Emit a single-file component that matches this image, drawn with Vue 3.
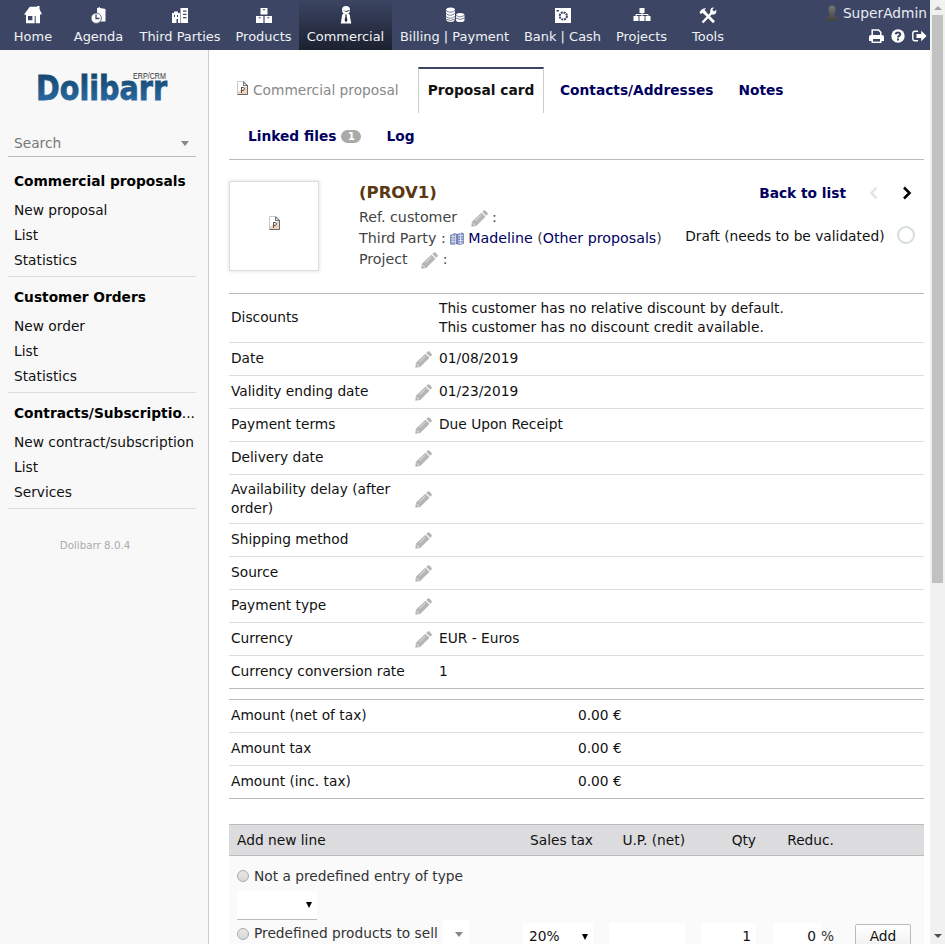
<script setup>
const nav = [
  { id: 'home', label: 'Home', w: 64 },
  { id: 'agenda', label: 'Agenda', w: 67 },
  { id: 'third', label: 'Third Parties', w: 96 },
  { id: 'products', label: 'Products', w: 71 },
  { id: 'commercial', label: 'Commercial', w: 93, active: true },
  { id: 'billing', label: 'Billing | Payment', w: 125 },
  { id: 'bank', label: 'Bank | Cash', w: 91 },
  { id: 'projects', label: 'Projects', w: 67 },
  { id: 'tools', label: 'Tools', w: 66 },
]
const menus = [
  { title: 'Commercial proposals', items: ['New proposal', 'List', 'Statistics'] },
  { title: 'Customer Orders', items: ['New order', 'List', 'Statistics'] },
  { title: 'Contracts/Subscriptio', more: true, items: ['New contract/subscription', 'List', 'Services'] },
]
const fields = [
  { label: 'Discounts', value: 'This customer has no relative discount by default.\nThis customer has no discount credit available.', tall: true },
  { label: 'Date', value: '01/08/2019', edit: true },
  { label: 'Validity ending date', value: '01/23/2019', edit: true },
  { label: 'Payment terms', value: 'Due Upon Receipt', edit: true },
  { label: 'Delivery date', value: '', edit: true },
  { label: 'Availability delay (after order)', value: '', edit: true, tall: true },
  { label: 'Shipping method', value: '', edit: true },
  { label: 'Source', value: '', edit: true },
  { label: 'Payment type', value: '', edit: true },
  { label: 'Currency', value: 'EUR - Euros', edit: true },
  { label: 'Currency conversion rate', value: '1' },
]
const amounts = ['Amount (net of tax)', 'Amount tax', 'Amount (inc. tax)']
</script>

<template>
  <div class="page">
    <svg class="defs" width="0" height="0">
      <symbol id="pencil" viewBox="0 0 17 17">
        <path fill="#b5b5b5" d="M.3 16.7.9 11.7 10.4 2.7l4.1 4L5.2 15.9zM11.3 1.900 12.7.6q.9-.7 1.7 0l2.100 2.100q.7.9 0 1.700l-1.300 1.400z" />
        <path stroke="#fff" stroke-width=".7" fill="none" d="M4.600 10.700 10.400 5M1.700 13.200l2.300 2.200" />
      </symbol>
      <symbol id="doc" viewBox="0 0 11 14">
        <path fill="#fff" stroke="#c8c8c8" d="M.5.5h6l3.500 3.500v9.500H.5z" />
        <path fill="#f0d2ba" d="M1 11l8.500-6v8H1z" />
        <path fill="#777" d="M6 .5h1l3.500 3.500v1H6z" />
        <path fill="#fff" d="M7 2l2 2H7z" />
        <path stroke="#666" fill="none" d="M10.500 4v9.500H.5" />
        <path stroke="#555" fill="none" d="M4.500 12V6M5 6.500h1.500q1 0 1 1.200T6.300 9.500H5" />
      </symbol>
      <symbol id="home" viewBox="0 0 18 18">
        <path fill="#fff" fill-rule="evenodd" d="M0 8.500 5.800.8h8.400L18 8.300l-2 .3v8.600H2V8.700zM4 10v4.200h4.400V10zm6.700 0v7.200h1V10z" />
        <path fill="#fff" d="M13 0h2.500v4H13z" />
      </symbol>
      <symbol id="agenda" viewBox="0 0 18 18">
        <path fill="#fff" d="M7 2.300 10 1v1l5.500 1v12.600H7z" />
        <circle cx="6.200" cy="12.200" r="5.200" fill="#fff" stroke="#3c4664" stroke-width=".8" />
        <path stroke="#3c4664" stroke-width="1.300" fill="none" d="M6 8.500v4h3.500" />
      </symbol>
      <symbol id="third" viewBox="0 0 18 18">
        <path fill="#fff" fill-rule="evenodd" d="M1 7h2V5.500h4V7h2v10H7v-4H5.500v4H1zM3 9v2h1V9zm3 0v2h1V9zM9.500 2H17v15H9.500zM12 4.500v1.200h3.500V4.500zm0 3.300V9h3.500V7.800zm0 3.300v1.200h3.500v-1.200z" />
      </symbol>
      <symbol id="products" viewBox="0 0 18 18">
        <path fill="#fff" d="M5.500 2h7v6.500h-7zM1 10h7.400v7H1zm8.600 0H17v7H9.600z" />
        <path fill="#3c4664" d="M8 3.200h2v1H8zM3.700 11.200h2v1h-2zm8.600 0h2v1h-2z" />
      </symbol>
      <symbol id="commercial" viewBox="0 0 18 18">
        <circle cx="9" cy="4" r="4" fill="#fff" />
        <path fill="#fff" d="M6.200 7.500h5.600q1.400 1 1.500 5l1 5H3.800l.8-5q.2-4 1.600-5z" />
        <path fill="#222a3d" d="M8.200 8.500h1.600l-.3 1.600.9 4.200L9 16.500l-1.400-2.200.9-4.200zM5.500 4.300l3.700.8 3.400-1.200v.8L9.500 6z" />
      </symbol>
      <symbol id="billing" viewBox="0 0 20 18">
        <path fill="#fff" d="M1 4q0-2.500 4.600-2.500T10 4v9.500Q9 16 5.500 16T1 13.500zM11 9q0-2 4.200-2T19.500 9v5q0 2-4.300 2T11 14z" />
        <path stroke="#3c4664" stroke-width=".7" fill="none" d="M1 4.500Q5 8 10 4.500M1 7.500Q5 11 10 7.500M1 10.500q4 3.500 9 0M1 13q4 3 9 0M11 9.500q4 3 8.500 0M11 12q4 3 8.500 0" />
      </symbol>
      <symbol id="bank" viewBox="0 0 18 18">
        <path fill="#fff" d="M1 2h16v15H1z" />
        <circle cx="9.300" cy="10" r="3.600" fill="none" stroke="#3c4664" stroke-width="2" stroke-dasharray="2 .8" />
        <path fill="#3c4664" d="M2.500 4h2.500v1.500H2.500z" />
      </symbol>
      <symbol id="projects" viewBox="0 0 18 18">
        <path fill="#fff" d="M6.500 2h5v5h-5zM.5 10h5v5h-5zm6 0h5v5h-5zm6 0h5v5h-5z" />
        <path stroke="#fff" fill="none" d="M9 7v3M3 10V8.500h12V10" />
      </symbol>
      <symbol id="tools" viewBox="0 0 18 18">
        <path stroke="#fff" stroke-width="2.700" fill="none" d="m5 6 10 10.200" />
        <path stroke="#fff" stroke-width="2.400" fill="none" d="m12.500 7-9 9.500" />
        <path fill="#fff" d="M.5 6.500Q2 2.500 7 2L5.500 4l2.200 2.300L5.500 8.500 3.800 6.700 2 8zM12 2.200q1.600-1 3-.7l-1.700 2.300 1.700 1.600 2.300-1.700q.6 4.500-3.200 5-4.600-.8-2.100-6.500z" />
      </symbol>
    </svg>

    <header class="topbar">
      <nav class="nav">
        <a v-for="n in nav" :key="n.id" class="nav-item" :class="{ active: n.active }" :style="{ width: n.w + 'px' }">
          <svg class="nav-icon" :class="n.id"><use :href="'#' + n.id" /></svg>
          <span>{{ n.label }}</span>
        </a>
      </nav>
      <div class="login">
        <div class="user">
          <svg width="14" height="17" viewBox="0 0 14 17">
            <defs><linearGradient id="ug" x2="0" y2="1"><stop stop-color="#777" /><stop offset="1" stop-color="#414141" /></linearGradient></defs>
            <path fill="url(#ug)" d="M7 .5q3.500 0 3.500 4 0 3.500-1.500 5v1.300q4 .7 4.300 2.600V16H.7v-2.600q.3-1.900 4.300-2.600V9.500q-1.500-1.500-1.500-5 0-4 3.500-4z" />
          </svg>
          <span>SuperAdmin</span>
        </div>
        <div class="actions">
          <svg width="15" height="14" viewBox="0 0 15 14">
            <path fill="none" stroke="#fff" stroke-width="1.500" d="M3.200 7V1h6.300l2.300 2.300V7" />
            <path fill="#fff" d="M2 6h11q2 0 2 2v4h-2.500v2h-10v-2H0V8q0-2 2-2z" />
            <path fill="#3c4664" d="M4 10h7v2.600H4z" />
          </svg>
          <svg width="14" height="14" viewBox="0 0 14 14">
            <circle cx="7" cy="7" r="6.700" fill="#fff" />
            <path fill="none" stroke="#3c4664" stroke-width="2" d="M4.500 5.200Q5 3.500 7 3.500t2.300 1.700Q9.200 6.400 8 7q-1 .5-1 1.500M7 9.600v1.900" />
          </svg>
          <svg width="15" height="13" viewBox="0 0 15 13">
            <path fill="none" stroke="#fff" stroke-width="1.400" d="M6 1.200H3Q.8 1.200.8 3.500v5q0 2.300 2.200 2.300h3" />
            <path fill="#fff" d="M4.500 4h4.700V.7L14.600 6l-5.400 5.300V8H4.500z" />
          </svg>
        </div>
      </div>
    </header>

    <div class="body">
      <aside class="side">
        <svg class="logo" width="134" height="36" viewBox="0 0 134 36">
          <defs><linearGradient id="lg" x2="0" y2="1"><stop stop-color="#124064" /><stop offset="1" stop-color="#2d70ab" /></linearGradient></defs>
          <text class="brand" x="0" y="30" textLength="131" lengthAdjust="spacingAndGlyphs">Dolibarr</text>
          <text class="crm" x="97" y="9" textLength="33" lengthAdjust="spacingAndGlyphs">ERP/CRM</text>
        </svg>
        <div class="search"><span>Search</span><i class="caret"></i></div>
        <section v-for="m in menus" :key="m.title" class="menu">
          <div class="menu-title"><b>{{ m.title }}</b><span v-if="m.more">...</span></div>
          <a v-for="i in m.items" :key="i">{{ i }}</a>
        </section>
        <div class="version">Dolibarr 8.0.4</div>
      </aside>

      <main class="main">
        <div class="tabs">
          <div class="tab-row">
            <div class="tab-title"><svg width="11" height="14"><use href="#doc" /></svg><span>Commercial proposal</span></div>
            <a class="tab current">Proposal card</a>
            <a class="tab contacts">Contacts/Addresses</a>
            <a class="tab">Notes</a>
          </div>
          <div class="tab-row second">
            <a>Linked files</a><span class="badge">1</span><a class="log">Log</a>
          </div>
        </div>

        <div class="banner">
          <div class="photo"><svg width="11" height="14"><use href="#doc" /></svg></div>
          <div class="ref">
            <div class="ref-id">(PROV1)</div>
            <div class="line">Ref. customer <svg class="pen"><use href="#pencil" /></svg> :</div>
            <div class="line">Third Party :
              <svg class="company" width="14" height="13" viewBox="0 0 14 13">
                <path fill="#8490bd" d="M0 3 5 1l2 1 5-1.500 2 1v10.500l-5 1-2-1-5 1-2-1z" />
                <path fill="#55649c" d="M6.500 2 7.500 2.500V12.500L6.500 12z" />
                <path stroke="#d8def2" stroke-width=".9" fill="none" d="M1 4.500h5.500M1 7h5.500M1 9.500h5.500M8 3.500h5M8 6h5M8 8.500h5M8 11h5M3 2.500V12M5.500 2.500V12M10.500 1.500V12" />
              </svg>
              <a>Madeline</a> (<a>Other proposals</a>)
            </div>
            <div class="line">Project <svg class="pen"><use href="#pencil" /></svg> :</div>
          </div>
          <div class="status">
            <div class="pager">
              <a>Back to list</a>
              <svg class="prev" width="10" height="14" viewBox="0 0 10 14"><path d="m7.500 1.500-5 5.500 5 5.500" /></svg>
              <svg class="next" width="10" height="14" viewBox="0 0 10 14"><path d="M2 1.500 7.500 7 2 12.500" /></svg>
            </div>
            <div class="state"><span>Draft (needs to be validated)</span><i></i></div>
          </div>
        </div>

        <div class="table">
          <div v-for="f in fields" :key="f.label" class="row" :class="{ tall: f.tall }">
            <div class="label">{{ f.label }}</div>
            <div class="edit"><svg v-if="f.edit" class="pen"><use href="#pencil" /></svg></div>
            <div class="value">{{ f.value }}</div>
          </div>
        </div>
        <div class="table amounts">
          <div v-for="a in amounts" :key="a" class="row"><div class="amount-label">{{ a }}</div><div>0.00 €</div></div>
        </div>

        <div class="new-line">
          <div class="new-head">
            <span class="c0">Add new line</span><span class="c1">Sales tax</span><span class="c2">U.P. (net)</span><span class="c3">Qty</span><span class="c4">Reduc.</span>
          </div>
          <div class="new-body">
            <div class="entry">
              <div class="choice"><i class="radio"></i>Not a predefined entry of type</div>
              <div class="type"><i class="arrow"></i></div>
              <div class="choice last"><i class="radio"></i>Predefined products to sell<span class="combo"><i class="caret"></i></span></div>
            </div>
            <div class="inputs">
              <div class="box vat"><span>20%</span><i class="arrow"></i></div>
              <div class="box price"></div>
              <div class="box qty">1</div>
              <div class="box disc">0</div>
              <span class="pct">%</span>
              <div class="add">Add</div>
            </div>
          </div>
        </div>
      </main>
    </div>

    <div class="scroll"><i class="up"></i><div class="thumb"></div><i class="down"></i></div>
  </div>
</template>

<style>
body { margin: 0; overflow: hidden; }
</style>

<style scoped>
.page { width: 945px; height: 944px; overflow: hidden; display: grid; grid-template: 50px 894px / 930px 15px; font: 13.76px/19px "DejaVu Sans", sans-serif; color: #111; background: #fff; }
.page * { box-sizing: border-box; }
.defs { position: absolute; }
svg { flex: none; }
.topbar { background: #3c4664; color: #fff; display: flex; justify-content: space-between; }
.nav { display: flex; padding-left: 1px; font-size: 12.960px; }
.nav-item { height: 50px; display: flex; flex-direction: column; align-items: center; padding-top: 6px; white-space: nowrap; line-height: 19px; }
.nav-icon { width: 18px; height: 18px; margin-bottom: 3px; }
.nav-icon.billing { width: 20px; }
.active { background: linear-gradient(#3b4562, #1c212f); }
.login { width: 110px; padding: 4px 3px 0 0; color: #e9ebf1; }
.user { display: flex; justify-content: flex-end; gap: 4px; height: 20px; }
.user svg { margin-top: 1px; }
.actions { display: flex; justify-content: flex-end; align-items: center; gap: 7px; height: 24px; }
.body { grid-row: 2; display: flex; }
.side { width: 209px; border-right: 1px solid #ccc; background: #f8f8f8; padding: 18px 12px 0 8px; color: #000; }
.logo { display: block; margin: 2px 0 0 28px; overflow: visible; }
.brand { font: bold 34.500px "DejaVu Sans", sans-serif; fill: url(#lg); stroke: url(#lg); stroke-width: .8; }
.crm { font: 9.500px "Liberation Sans", sans-serif; fill: #333; }
.search { height: 26px; margin-top: 25px; padding: 0 7px 0 6px; border-bottom: 1px solid #bbb; display: flex; justify-content: space-between; align-items: center; color: #777; line-height: 23px; }
.caret { width: 0; height: 0; border: 4.500px solid transparent; border-top: 5px solid #888; border-bottom: 0; }
.menu { height: 116px; padding: 8px 0 0 6px; border-bottom: 1px solid #ddd; }
.search + .menu { height: 120px; padding-top: 12px; }
.menu-title { height: 25px; line-height: 25px; margin-bottom: 4px; white-space: nowrap; }
.menu a { display: block; height: 25px; line-height: 25px; white-space: nowrap; }
.version { text-align: center; padding: 27px 14px 0 0; color: #aaa; font-size: 10.300px; }
.main { width: 721px; padding: 17px 6px 0 20px; }
.tabs { height: 93px; border-bottom: 1px solid #bbb; }
.tab-row { display: flex; height: 46px; line-height: 46px; white-space: nowrap; }
.tab-title { width: 189px; display: flex; align-items: center; padding-left: 8px; gap: 5px; color: #888; }
.tab-title svg { margin-top: -4px; }
a { color: #00005f; }
.side a { color: #111; }
.nav a { color: #f0f1f5; }
.tab { font-weight: bold; }
.current { width: 126px; text-align: center; border: 1px solid #ccc; border-top: 2px solid #3c4664; border-bottom: 0; line-height: 43px; color: #111; }
.contacts { margin: 0 25px 0 16px; }
.second { padding-left: 19px; align-items: center; font-weight: bold; }
.badge { width: 20px; height: 13px; margin: 1px 25px 0 5px; border-radius: 7px; background: #aaa; color: #fff; font-size: 10.300px; line-height: 13px; text-align: center; }
.banner { height: 133px; padding-top: 21px; display: flex; }
.photo { width: 90px; height: 90px; border: 1px solid #ddd; box-shadow: 0 0 4px #ddd; display: flex; align-items: center; justify-content: center; margin-right: 40px; }
.photo svg { margin-top: -6px; }
.ref { width: 310px; color: #444; white-space: nowrap; font-size: 14.240px; }
.ref-id { height: 26px; line-height: 23px; font-size: 16.500px; font-weight: bold; color: #5a3710; }
.line { height: 21px; line-height: 21px; }
.pen { width: 17px; height: 17px; vertical-align: -5px; }
.line .pen { margin-left: 9px; vertical-align: -5px; }
.company { vertical-align: -2px; margin-right: 4px; }
.status { flex: 1; }
.pager { display: flex; justify-content: flex-end; align-items: center; height: 24px; padding-right: 12px; font-weight: bold; }
.prev { margin: 0 23px; }
.pager path { fill: none; stroke: #000; stroke-width: 2.600; }
.pager .prev path { stroke: #e4e4e4; }
.state { display: flex; justify-content: flex-end; align-items: center; height: 18px; margin-top: 21px; padding-right: 9px; white-space: nowrap; }
.state span { padding-top: 2px; }
.state i { width: 18px; height: 18px; margin-left: 12.500px; border: 2px solid #d5dddb; border-radius: 50%; }
.table { border-top: 1px solid #bbb; border-bottom: 1px solid #bbb; }
.row { height: 33px; display: flex; align-items: center; border-bottom: 1px solid #ddd; padding: 0 0 2px 2px; }
.row:last-child { border-bottom: 0; height: 32px; }
.tall { height: 49px; padding-bottom: 0; }
.label { width: 184px; padding-right: 6px; }
.tall:first-child .label { padding-bottom: 2px; }
.edit { width: 24px; padding-top: 4px; height: 22px; }
.tall .edit { margin-bottom: 2px; }
.edit .pen { display: block; }
.value { white-space: pre; }
.amounts { margin-top: 10px; }
.amount-label { width: 347px; }
.new-line { margin-top: 25px; background: #fafafa; height: 120px; }
.new-head { height: 32px; display: flex; line-height: 30px; background: #dcdcdf; border-top: 1px solid #bbb; border-bottom: 1px solid #bbb; text-align: right; }
.c0 { width: 294px; padding-left: 8px; text-align: left; }
.c1 { width: 70px; }
.c2 { width: 92px; }
.c3 { width: 71px; }
.c4 { width: 78px; }
.new-body { display: flex; padding-left: 8px; color: #333; }
.entry { width: 286px; padding-top: 10px; white-space: nowrap; }
.choice { display: flex; align-items: center; height: 20px; }
.radio { width: 12px; height: 12px; margin-right: 5px; border: 1px solid #aaa; border-radius: 50%; background: linear-gradient(#e8e8e8, #d8d8d8); }
.type { width: 80px; height: 29px; margin-top: 5px; background: #fff; border-bottom: 1px solid #bbb; display: flex; justify-content: flex-end; align-items: center; padding-right: 5px; }
.last { height: 27px; }
.combo { width: 27px; height: 27px; margin-left: 5px; background: #fff; display: flex; align-items: center; justify-content: center; padding: 2px 0 0 5px; }
.arrow { width: 0; height: 0; border: 3px solid transparent; border-top: 6px solid #000; border-bottom: 0; }
.inputs { display: flex; padding-top: 67px; line-height: 27px; }
.box { height: 27px; background: #fff; color: #111; text-align: right; padding-right: 5px; }
.vat { width: 70px; margin-right: 16px; padding: 0 5px 0 6px; display: flex; justify-content: space-between; align-items: center; }
.price { width: 76px; margin-right: 16px; }
.qty { width: 55px; margin-right: 17px; }
.disc { width: 48px; }
.pct { width: 34px; }
.add { width: 56px; height: 27px; margin-top: 1px; line-height: 23px; text-align: center; color: #111; border: 1px solid #bbb; border-radius: 2px; background: linear-gradient(#fff, #eee); }
.scroll { grid-column: 2; grid-row: 1 / 3; background: #f1f1f1; display: flex; flex-direction: column; align-items: center; }
.thumb { width: 11px; height: 568px; background: #c1c1c1; margin-bottom: auto; margin-top: 5px; }
.up { margin-top: 6px; border: 4px solid transparent; border-bottom: 4px solid #a3a3a3; border-top: 0; }
.down { margin-bottom: 6px; border: 4px solid transparent; border-top: 4px solid #505050; border-bottom: 0; }
</style>
